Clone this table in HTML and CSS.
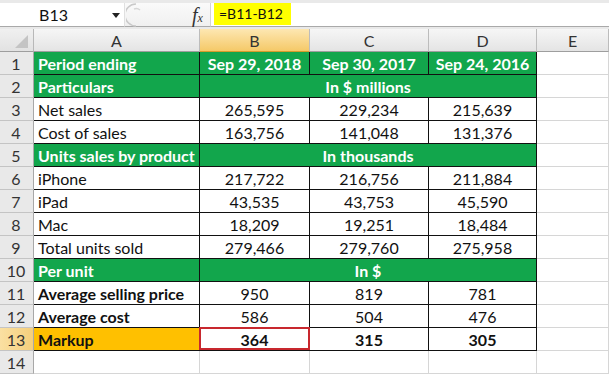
FILE: index.html
```html
<!DOCTYPE html>
<html>
<head>
<meta charset="utf-8">
<link rel="stylesheet" href="styles.css">
</head>
<body>
<div class="app">
  <div class="fbar">
    <div class="namebox">
      <span class="ref">B13</span>
      <svg class="dd" width="8" height="5" viewBox="0 0 8 5"><polygon points="0,0 8,0 4,5" fill="#222"/></svg>
    </div>
    <div class="btns">
      <svg class="circ" width="22" height="24" viewBox="0 0 22 24"><path d="M10 1 A11 11 0 0 0 10 23" fill="none" stroke="#c9c9c9" stroke-width="1.5"/><path d="M8 6 A6 6 0 0 1 14 7" fill="none" stroke="#d6d6d6" stroke-width="1.5"/></svg>
      <span class="fx">f<span class="sx">x</span></span>
    </div>
    <div class="formula"><span class="hl">=B11-B12</span></div>
  </div>
  <div class="sheet">
    <div class="corner"><svg width="33" height="22" viewBox="0 0 33 22"><polygon points="15,19 28,19 28,6" fill="#c4c4c4"/></svg></div>
    <div class="ch">A</div><div class="ch sel">B</div><div class="ch">C</div><div class="ch">D</div><div class="ch">E</div>

    <div class="rh">1</div>
    <div class="t g lbl">Period ending</div><div class="t g num">Sep 29, 2018</div><div class="t g num">Sep 30, 2017</div><div class="t g num">Sep 24, 2016</div><div class="c"></div>

    <div class="rh">2</div>
    <div class="t g lbl">Particulars</div><div class="t g num span3">In $ millions</div><div class="c"></div>

    <div class="rh">3</div>
    <div class="t lbl">Net sales</div><div class="t num">265,595</div><div class="t num">229,234</div><div class="t num">215,639</div><div class="c"></div>

    <div class="rh">4</div>
    <div class="t lbl">Cost of sales</div><div class="t num">163,756</div><div class="t num">141,048</div><div class="t num">131,376</div><div class="c"></div>

    <div class="rh">5</div>
    <div class="t g lbl">Units sales by product</div><div class="t g num span3">In thousands</div><div class="c"></div>

    <div class="rh">6</div>
    <div class="t lbl">iPhone</div><div class="t num">217,722</div><div class="t num">216,756</div><div class="t num">211,884</div><div class="c"></div>

    <div class="rh">7</div>
    <div class="t lbl">iPad</div><div class="t num">43,535</div><div class="t num">43,753</div><div class="t num">45,590</div><div class="c"></div>

    <div class="rh">8</div>
    <div class="t lbl">Mac</div><div class="t num">18,209</div><div class="t num">19,251</div><div class="t num">18,484</div><div class="c"></div>

    <div class="rh">9</div>
    <div class="t lbl">Total units sold</div><div class="t num">279,466</div><div class="t num">279,760</div><div class="t num">275,958</div><div class="c"></div>

    <div class="rh">10</div>
    <div class="t g lbl">Per unit</div><div class="t g num span3">In $</div><div class="c"></div>

    <div class="rh">11</div>
    <div class="t lbl bold">Average selling price</div><div class="t num">950</div><div class="t num">819</div><div class="t num">781</div><div class="c"></div>

    <div class="rh">12</div>
    <div class="t lbl bold">Average cost</div><div class="t num">586</div><div class="t num">504</div><div class="t num">476</div><div class="c"></div>

    <div class="rh sel">13</div>
    <div class="t lbl bold gold">Markup</div><div class="t num bold active">364<span class="selbox"></span></div><div class="t num bold">315</div><div class="t num bold">305</div><div class="c"></div>

    <div class="rh">14</div>
    <div class="c"></div><div class="c"></div><div class="c"></div><div class="c"></div><div class="c"></div>
  </div>
</div>
</body>
</html>
```

FILE: styles.css
```css
* { box-sizing: border-box; }
html, body { margin: 0; padding: 0; background: #fff; }
body {
  width: 609px;
  height: 374px;
  overflow: hidden;
  font-family: Lato, "Liberation Sans", sans-serif;
  font-size: 16px;
  color: #111;
}
.app { width: 609px; }

.fbar {
  display: flex;
  height: 29px;
  padding-top: 3px;
  background: #e9e9e9;
  border-bottom: 2px solid #e9e9e9;
}
.fbar > div {
  height: 24px;
  border-bottom: 1px solid #a9a9a9;
}
.namebox {
  width: 124px;
  background: #fff;
  display: flex;
  align-items: center;
  position: relative;
}
.namebox .ref {
  width: 104px;
  text-align: center;
  padding-left: 3px;
  color: #111;
}
.namebox .dd { margin-left: 8px; margin-top: 1px; }
.btns {
  width: 86px;
  background: linear-gradient(#fafafa, #f0f0f0);
  border-left: 1px solid #e0e0e0;
  display: flex;
  align-items: center;
}
.circ { margin-left: 1px; }
.fx {
  margin-left: 44px;
  font-family: "Liberation Serif", serif;
  font-style: italic;
  font-size: 20px;
  color: #333;
  line-height: 1;
}
.fx .sx { font-size: 12px; }
.formula {
  flex: 1;
  background: #fff;
  border-left: 1px solid #d4d4d4;
  padding-left: 3px;
}
.hl {
  display: inline-block;
  height: 22px;
  line-height: 22px;
  padding: 0 8px 0 5px;
  font-size: 14px;
  background: #ffff00;
  color: #111;
}

.sheet {
  display: grid;
  grid-template-columns: 34px 166px 110px 119px 108px 1fr;
  grid-auto-rows: 23px;
}
.sheet > div {
  border-right: 1px solid #d6d6d6;
  border-bottom: 1px solid #d6d6d6;
  display: flex;
  align-items: center;
  white-space: nowrap;
}
.corner {
  background: linear-gradient(#f0f0f0, #e2e2e2);
  border-right-color: #b8b8b8 !important;
  border-bottom-color: #9e9e9e !important;
}
.corner svg { display: block; }
.sheet > .ch {
  justify-content: center;
  background: linear-gradient(#f6f6f6, #e4e4e4);
  border-right-color: #bcbcbc;
  border-bottom-color: #9e9e9e;
  color: #333;
}
.sheet > .ch.sel {
  background: linear-gradient(#fde7b2, #f5c968);
  border-bottom-color: #d59b2c;
}
.sheet > .rh {
  justify-content: center;
  background: #e9e9e9;
  border-right-color: #a8a8a8;
  border-bottom-color: #c4c4c4;
  color: #333;
  padding-right: 1px;
}
.sheet > .rh.sel {
  background: linear-gradient(90deg, #fae0a2, #f5cf7c);
}
.sheet > .t {
  border-right-color: #111;
  border-bottom-color: #111;
}
.lbl { padding-left: 4px; }
.num { justify-content: center; }
.bold { font-weight: 700; }
.g {
  background: #12a64c;
  color: #fff;
  font-weight: 700;
}
.gold { background: #ffc000; }
.span3 { grid-column: span 3; }
.active { position: relative; }
.selbox {
  position: absolute;
  top: -1px;
  left: -1px;
  right: -1px;
  bottom: 0;
  border: 2px solid #c8282e;
}
```
